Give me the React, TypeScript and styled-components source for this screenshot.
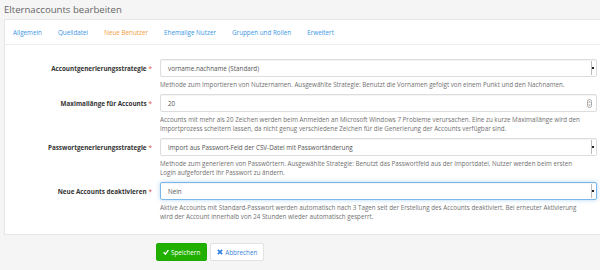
import React from "react";
import styled, { createGlobalStyle } from "styled-components";

const GlobalStyle = createGlobalStyle`
  html, body {
    margin: 0;
    padding: 0;
    background: #f5f5f5;
    font-family: "Open Sans", "Liberation Sans", sans-serif;
  }
`;

const Page = styled.div`
  width: 600px;
  height: 270px;
  overflow: hidden;
  background: #f5f5f5;
`;

const Title = styled.h1`
  margin: 0;
  height: 19px;
  padding-left: 4px;
  font-size: 9.6px;
  font-weight: 400;
  line-height: 20px;
  color: #666;
`;

const Panel = styled.div`
  margin-left: 4px;
  width: 596px;
  background: #fff;
  border: 1px solid #e6e6e6;
  border-right: none;
  box-sizing: border-box;
`;

const Tabs = styled.nav`
  display: flex;
  height: 24px;
  align-items: center;
  border-bottom: 1px solid #eee;
`;

const Tab = styled.span<{ $active?: boolean }>`
  padding: 0 8px;
  font-size: 6.3px;
  color: ${(p) => (p.$active ? "#f39c3c" : "#3b97e3")};
`;

const Form = styled.div`
  display: flex;
  flex-direction: column;
  gap: 5px;
  padding: 14px 3px 13px 0;
`;

const Row = styled.div`
  display: grid;
  grid-template-columns: 155px 1fr;
  align-items: start;
`;

const Label = styled.label`
  height: 18px;
  display: flex;
  align-items: center;
  justify-content: flex-end;
  padding-right: 8px;
  font-size: 6.3px;
  font-weight: 700;
  color: #333;
`;

const Star = styled.span`
  color: #e74c3c;
  margin-left: 2px;
  font-weight: 400;
`;

const Field = styled.div`
  display: flex;
  flex-direction: column;
`;

const Input = styled.div<{ $focused?: boolean }>`
  height: 18px;
  box-sizing: border-box;
  display: flex;
  align-items: center;
  justify-content: space-between;
  padding: 0 2px 0 7px;
  border: 1px solid ${(p) => (p.$focused ? "#7ab8ec" : "#ddd")};
  border-radius: 2px;
  box-shadow: ${(p) =>
    p.$focused
      ? "inset 0 1px 1px rgba(0,0,0,.05), 0 0 4px rgba(102,175,233,.5)"
      : "inset 0 1px 1px rgba(0,0,0,.05)"};
  font-size: 6.3px;
  color: #555;
`;

const SelectArrow = styled.span`
  width: 2px;
  height: 14px;
  border-left: 1px solid #bbb;
  position: relative;
  &::after {
    content: "";
    position: absolute;
    left: 0;
    top: 6px;
    width: 1.5px;
    height: 2px;
    background: #222;
  }
`;

const Spinner = styled.span`
  width: 5px;
  height: 9px;
  margin-right: 2px;
  border: 1px solid #aaa;
  border-radius: 3px;
  box-sizing: border-box;
  font-size: 4px;
  line-height: 3.5px;
  color: #666;
  text-align: center;
`;

const Help = styled.p`
  margin: 3px 0 0;
  font-size: 6.25px;
  line-height: 9px;
  color: #707070;
`;

const Actions = styled.div`
  display: flex;
  gap: 3px;
  padding: 8px 0 0 156px;
`;

const Button = styled.button<{ $primary?: boolean }>`
  height: 18px;
  display: flex;
  align-items: center;
  gap: 2px;
  padding: 0 6px;
  border-radius: 2px;
  font-family: inherit;
  font-size: 6.3px;
  border: 1px solid ${(p) => (p.$primary ? "#1eaa00" : "#e2e2e2")};
  background: ${(p) => (p.$primary ? "#21b000" : "#fff")};
  color: ${(p) => (p.$primary ? "#fff" : "#3b7fd8")};
`;

const Check = () => (
  <svg width="6" height="6" viewBox="0 0 10 10">
    <path d="M1 5.5 L4 8.5 L9 2" stroke="#fff" strokeWidth="2.2" fill="none" />
  </svg>
);

const Cross = () => (
  <svg width="6" height="6" viewBox="0 0 10 10">
    <path d="M1.5 1.5 L8.5 8.5 M8.5 1.5 L1.5 8.5" stroke="#2f7fe0" strokeWidth="2.6" fill="none" />
  </svg>
);

const tabs = ["Allgemein", "Quelldatei", "Neue Benutzer", "Ehemalige Nutzer", "Gruppen und Rollen", "Erweitert"];

export default function App() {
  return (
    <Page>
      <GlobalStyle />
      <Title>Elternaccounts bearbeiten</Title>
      <Panel>
        <Tabs>
          {tabs.map((t) => (
            <Tab key={t} $active={t === "Neue Benutzer"}>
              {t}
            </Tab>
          ))}
        </Tabs>
        <Form>
          <Row>
            <Label>
              Accountgenerierungsstrategie<Star>*</Star>
            </Label>
            <Field>
              <Input>
                vorname.nachname (Standard)
                <SelectArrow />
              </Input>
              <Help>
                Methode zum Importieren von Nutzernamen. Ausgewählte Strategie: Benutzt die Vornamen gefolgt von einem
                Punkt und den Nachnamen.
              </Help>
            </Field>
          </Row>
          <Row>
            <Label>
              Maximallänge für Accounts<Star>*</Star>
            </Label>
            <Field>
              <Input>
                20
                <Spinner>
                  ˄
                  <br />˅
                </Spinner>
              </Input>
              <Help>
                Accounts mit mehr als 20 Zeichen werden beim Anmelden an Microsoft Windows 7 Probleme verursachen. Eine
                zu kurze Maximallänge wird den
                <br />
                Importprozess scheitern lassen, da nicht genug verschiedene Zeichen für die Generierung der Accounts
                verfügbar sind.
              </Help>
            </Field>
          </Row>
          <Row>
            <Label>
              Passwortgenerierungsstrategie<Star>*</Star>
            </Label>
            <Field>
              <Input>
                Import aus Passwort-Feld der CSV-Datei mit Passwortänderung
                <SelectArrow />
              </Input>
              <Help>
                Methode zum generieren von Passwörtern. Ausgewählte Strategie: Benutzt das Passwortfeld aus der
                Importdatei. Nutzer werden beim ersten
                <br />
                Login aufgefordert ihr Passwort zu ändern.
              </Help>
            </Field>
          </Row>
          <Row>
            <Label>
              Neue Accounts deaktivieren<Star>*</Star>
            </Label>
            <Field>
              <Input $focused>
                Nein
                <SelectArrow />
              </Input>
              <Help>
                Aktive Accounts mit Standard-Passwort werden automatisch nach 3 Tagen seit der Erstellung des Accounts
                deaktiviert. Bei erneuter Aktivierung
                <br />
                wird der Account innerhalb von 24 Stunden wieder automatisch gesperrt.
              </Help>
            </Field>
          </Row>
        </Form>
      </Panel>
      <Actions>
        <Button $primary>
          <Check />
          Speichern
        </Button>
        <Button>
          <Cross />
          Abbrechen
        </Button>
      </Actions>
    </Page>
  );
}
